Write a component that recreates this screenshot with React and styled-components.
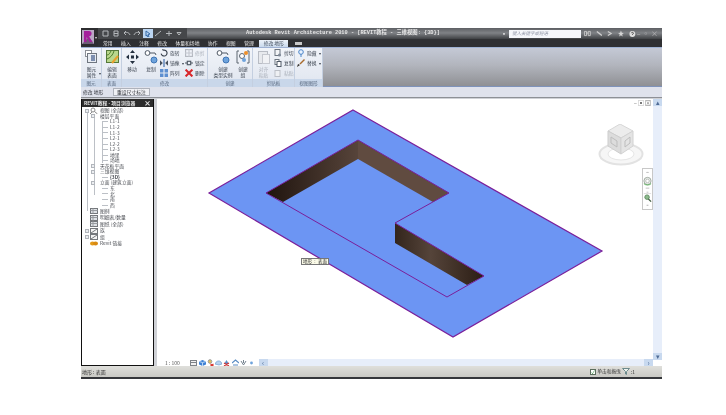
import React from 'react'
import styled, { createGlobalStyle } from 'styled-components'

const GlobalStyle = createGlobalStyle`
html, body {
    margin: 0;
    background: #fff;
}
body {
    font-family: "Noto Sans CJK SC", "Liberation Sans", sans-serif;
}
`

const tabs = ['常用', '插入', '注释', '修改', '体量和场地', '协作', '视图', '管理']

const tree = [
    { label: '视图 (全部)', depth: 0, box: true, icon: 'views' },
    { label: '楼层平面', depth: 1, box: true },
    { label: 'L1-1', depth: 2 },
    { label: 'L1-2', depth: 2 },
    { label: 'L1-3', depth: 2 },
    { label: 'L2-1', depth: 2 },
    { label: 'L2-2', depth: 2 },
    { label: 'L2-3', depth: 2 },
    { label: '地里', depth: 2 },
    { label: '场地', depth: 2 },
    { label: '天花板平面', depth: 1, box: true },
    { label: '三维视图', depth: 1, box: true },
    { label: '{3D}', depth: 2, bold: true },
    { label: '立面 (建筑立面)', depth: 1, box: true },
    { label: '东', depth: 2 },
    { label: '北', depth: 2 },
    { label: '南', depth: 2 },
    { label: '西', depth: 2 },
    { label: '图例', depth: 0, icon: 'sheet', gap: true },
    { label: '明细表/数量', depth: 0, icon: 'sheet', gap: true },
    { label: '图纸 (全部)', depth: 0, icon: 'sheet', gap: true },
    { label: '族', depth: 0, box: true, icon: 'family', gap: true },
    { label: '组', depth: 0, box: true, icon: 'family', gap: true },
    { label: 'Revit 链接', depth: 0, icon: 'link', gap: true },
]

const RibbonGlyph = ({ kind }) => {
    if (kind === 'props') return (
        <svg width="13" height="14" viewBox="0 0 13 14">
            <rect x="0.5" y="0.5" width="6" height="6" fill="#fff" stroke="#8b8f96" />
            <rect x="2.5" y="3.5" width="9" height="9" fill="#e9edf3" stroke="#6f7680" />
            <rect x="6" y="5" width="4" height="6" fill="#7d8fb0" />
        </svg>
    )
    if (kind === 'surface') return (
        <svg width="13" height="14" viewBox="0 0 13 14">
            <rect x="0.5" y="0.5" width="12" height="12" fill="#b9d78c" stroke="#55793a" />
            <path d="M1 9 C4 8 7 5 8 1 M1 5 C3 5 4 3 5 1" fill="none" stroke="#4d7d2c" />
            <path d="M6 13 L12 6" stroke="#e8a02c" strokeWidth="2" />
        </svg>
    )
    if (kind === 'move') return (
        <svg width="13" height="14" viewBox="0 0 13 14">
            <path d="M6.5 0 L9 3 H4 Z M6.5 14 L9 11 H4 Z M0 7 L3 4.5 V9.5 Z M13 7 L10 4.5 V9.5 Z" fill="#24303f" />
            <rect x="5" y="5.5" width="3" height="3" fill="#24303f" />
        </svg>
    )
    if (kind === 'copy') return (
        <svg width="14" height="14" viewBox="0 0 14 14">
            <circle cx="3.5" cy="3" r="2.4" fill="#fff" stroke="#4f5966" />
            <path d="M6 3 H11 L12 5" fill="none" stroke="#4f5966" />
            <circle cx="10" cy="10" r="3" fill="#6ea3dc" stroke="#3f75b5" />
        </svg>
    )
    if (kind === 'group') return (
        <svg width="14" height="14" viewBox="0 0 14 14">
            <path d="M3 1 H1 V13 H3 M11 1 H13 V13 H11" fill="none" stroke="#5d6671" />
            <circle cx="6" cy="6" r="2.5" fill="#fff" stroke="#5d6671" />
            <circle cx="10" cy="3" r="2" fill="#ee8f2a" />
            <circle cx="8" cy="10" r="2" fill="#6ea3dc" />
        </svg>
    )
    if (kind === 'paste') return (
        <svg width="12" height="14" viewBox="0 0 12 14">
            <rect x="0.5" y="1.5" width="9" height="12" fill="#e7e9ed" stroke="#b8bcc4" />
            <rect x="4.5" y="4.5" width="7" height="9" fill="#f1f2f5" stroke="#c5c8cf" />
        </svg>
    )
    return null
}

const SmallGlyph = ({ kind }) => {
    if (kind === 'rotate') return (
        <svg viewBox="0 0 7 7"><path d="M1 4 A2.6 2.6 0 1 0 3 1 L2 .5" fill="none" stroke="#39424e" /></svg>
    )
    if (kind === 'mirror') return (
        <svg viewBox="0 0 7 7"><path d="M3.5 0 V7" stroke="#3b69a8" /><path d="M0 1 L2.5 3.5 L0 6 Z M7 1 L4.5 3.5 L7 6 Z" fill="#47505c" /></svg>
    )
    if (kind === 'array') return (
        <svg viewBox="0 0 7 7"><path d="M0 0 H3 V3 H0 Z M4 0 H7 V3 H4 Z M0 4 H3 V7 H0 Z M4 4 H7 V7 H4 Z" fill="#5d8fd0" /></svg>
    )
    if (kind === 'trim') return (
        <svg viewBox="0 0 7 7"><rect x=".5" y=".5" width="6" height="6" fill="none" stroke="#b6bac2" /><path d="M3.5 0 V7 M0 3.5 H7" stroke="#c4c8cf" /></svg>
    )
    if (kind === 'lock') return (
        <svg viewBox="0 0 7 7"><path d="M0 3.5 H2 M5 3.5 H7" stroke="#4e5864" /><rect x="2" y="2" width="3" height="3" fill="none" stroke="#4e5864" /></svg>
    )
    if (kind === 'delete') return (
        <svg viewBox="0 0 7 7"><path d="M.5 .5 L6.5 6.5 M6.5 .5 L.5 6.5" stroke="#d8262a" strokeWidth="1.8" /></svg>
    )
    if (kind === 'cut') return (
        <svg viewBox="0 0 7 8"><rect x=".5" y=".5" width="5" height="6" fill="#f2f4f7" stroke="#6d7681" /><circle cx="5" cy="6" r="1.5" fill="#7f8a98" /></svg>
    )
    if (kind === 'clip') return (
        <svg viewBox="0 0 7 8"><rect x=".5" y=".5" width="4" height="5" fill="#fff" stroke="#6d7681" /><rect x="2.5" y="2.5" width="4" height="5" fill="#fff" stroke="#4f5966" /></svg>
    )
    if (kind === 'pasteSmall') return (
        <svg viewBox="0 0 7 8"><rect x=".5" y="1.5" width="5" height="6" fill="#eef0f3" stroke="#bcc0c7" /></svg>
    )
    if (kind === 'hide') return (
        <svg viewBox="0 0 7 8"><circle cx="3.5" cy="3" r="2.3" fill="#e9f3ff" stroke="#4c86c9" /><path d="M3.5 5 V8" stroke="#4c86c9" /></svg>
    )
    if (kind === 'brush') return (
        <svg viewBox="0 0 8 8"><path d="M7.5 .5 L3 5" stroke="#a86b2c" strokeWidth="1.4" /><path d="M0 8 L1 5 L3 6 Z" fill="#2e2a26" /></svg>
    )
    return null
}

const SmallTool = ({ kind, label, caret, muted }) => (
    <SmallRow $muted={muted}>
        <SmallGlyph kind={kind} />
        <span>{label}</span>
        {caret && <Caret>▾</Caret>}
    </SmallRow>
)

const LargeTool = ({ kind, lines, width, muted, caret }) => (
    <LargeToolBox $width={width} $muted={muted}>
        <GlyphSlot><RibbonGlyph kind={kind} /></GlyphSlot>
        {lines.map((line) => <span key={line}>{line}</span>)}
        {caret && <CaretCorner>▾</CaretCorner>}
    </LargeToolBox>
)

const AppButton = () => (
    <AppMenu>
        <svg width="12" height="14" viewBox="0 0 12 14">
            <rect width="12" height="14" fill="#b9a6c4" />
            <path d="M0 14 L7 7 L12 14 Z" fill="#6f5c78" />
            <path d="M2 1 H7 C10.5 1 10.5 6 7 6.5 L10.5 12 H7.5 L4.6 7 V12 H2 Z" fill="#a5219c" />
        </svg>
        <Caret>▾</Caret>
    </AppMenu>
)

const QuickIcon = ({ d, active }) => (
    <QuickButton $active={active}>
        <svg width="8" height="7" viewBox="0 0 8 7">
            <path d={d} fill="none" stroke={active ? '#356aa8' : '#b4b7ba'} strokeWidth="1" />
        </svg>
    </QuickButton>
)

const HelpIcons = () => (
    <HelpRow>
        <svg width="8" height="7" viewBox="0 0 8 7"><path d="M.5 1 H3 V6 H.5 Z M5 1 H7.5 V6 H5 Z M3 3 H5" fill="none" stroke="#cfcfcf" /></svg>
        <svg width="8" height="7" viewBox="0 0 8 7"><path d="M1 1 L7 6" stroke="#cfcfcf" strokeWidth="1.6" /></svg>
        <svg width="7" height="7" viewBox="0 0 7 7"><path d="M1 1 L5 3.5 L1 6" fill="none" stroke="#cfcfcf" strokeWidth="1.4" /></svg>
        <svg width="7" height="7" viewBox="0 0 7 7"><path d="M3.5 0 L4.5 2.5 L7 3 L5 4.5 L5.5 7 L3.5 5.5 L1.5 7 L2 4.5 L0 3 L2.5 2.5 Z" fill="#d4d4d4" /></svg>
        <svg width="8" height="8" viewBox="0 0 8 8"><circle cx="4" cy="4" r="3.5" fill="#e0e0e0" /><path d="M2.8 3 C3 1.6 5.4 1.8 5.2 3.2 C5 4 4 4 4 5" fill="none" stroke="#333" /></svg>
    </HelpRow>
)

const TreeIcon = ({ kind }) => {
    if (kind === 'views') return (
        <svg width="8" height="7" viewBox="0 0 8 7"><circle cx="3" cy="3" r="2" fill="#fff" stroke="#8a8a8a" /><path d="M4.5 4.5 L7.5 7 M0 7 L2 5" stroke="#8a8a8a" /></svg>
    )
    if (kind === 'sheet') return (
        <svg width="8" height="6" viewBox="0 0 8 6"><rect x=".5" y=".5" width="7" height="5" fill="#dfe2e6" stroke="#75787c" /><path d="M.5 2.5 H7.5 M3 .5 V5.5" stroke="#9a9da1" /></svg>
    )
    if (kind === 'family') return (
        <svg width="8" height="6" viewBox="0 0 8 6"><rect x=".5" y=".5" width="7" height="5" fill="#f4f4f4" stroke="#75787c" /><path d="M1 5 L7 1" stroke="#75787c" /></svg>
    )
    if (kind === 'link') return (
        <svg width="8" height="5" viewBox="0 0 8 5"><ellipse cx="2.5" cy="2.5" rx="2.5" ry="2" fill="#e39a19" /><ellipse cx="5.5" cy="2.5" rx="2.5" ry="2" fill="#d98a10" /></svg>
    )
    return null
}

const ViewCube = () => (
    <CubeWrap>
        <svg width="46" height="42" viewBox="0 0 46 42">
            <ellipse cx="23" cy="30" rx="21.5" ry="10.5" fill="#f6f6f6" stroke="#e2e2e2" strokeWidth="2" />
            <ellipse cx="23" cy="30" rx="13" ry="6" fill="#fff" stroke="#e6e6e6" />
            <path d="M22 0 L35 7 L23 14 L10 7 Z" fill="#ececec" stroke="#d6d6d6" />
            <path d="M10 7 L23 14 V30 L10 22 Z" fill="#dcdcdc" stroke="#cdcdcd" />
            <path d="M35 7 L23 14 V30 L35 22 Z" fill="#e4e4e4" stroke="#d2d2d2" />
            <path d="M13 13 L19 17 V23 L13 19 Z M27 17 L32 13 V19 L27 23 Z" fill="none" stroke="#bdbdbd" />
        </svg>
    </CubeWrap>
)

const NavBar = () => (
    <NavigationBar>
        <svg width="10" height="41" viewBox="0 0 10 41">
            <path d="M4 2 L5 1 L6 2" fill="none" stroke="#999" />
            <circle cx="5" cy="11" r="4" fill="#eef1ee" stroke="#98a39a" />
            <circle cx="5" cy="11" r="2" fill="#fff" stroke="#b5bbb6" />
            <path d="M1 14 C3 16 7 16 9 14" fill="none" stroke="#4ea84e" />
            <path d="M3 19 H7 M4 23.5 H6" stroke="#bbb" />
            <path d="M1 25 H9" stroke="#ddd" />
            <circle cx="4.5" cy="29" r="2.5" fill="#8dbb8d" stroke="#5f8a60" />
            <path d="M6 31 L9 34" stroke="#3f5c40" strokeWidth="1.4" />
            <path d="M4 38 H6" stroke="#aaa" />
        </svg>
    </NavigationBar>
)

const viewIcons = [
    <><rect x=".5" y="1.5" width="6" height="5" fill="#f2f2f2" stroke="#7f8388" /><path d="M.5 3.5 H6.5" stroke="#7f8388" /></>,
    <><path d="M3.5 1 L7 2.5 V5.5 L3.5 7 L0 5.5 V2.5 Z" fill="#3e82d6" /><path d="M3.5 3.5 V7 M0 2.5 L3.5 3.5 L7 2.5" stroke="#bcd6f2" fill="none" /></>,
    <><circle cx="3" cy="2.5" r="1.8" fill="#e6c45a" stroke="#9a9a9a" /><path d="M3.5 5 L6.5 7 M6.5 5 L3.5 7" stroke="#d8362f" strokeWidth="1.1" /></>,
    <><path d="M0 5 C1 2 4 1 6 3 L7 5 L4 6 Z" fill="#b7d2ee" stroke="#6a9dcf" strokeWidth=".7" /></>,
    <><path d="M1 5 L3.5 1 L6 5 Z" fill="#5e8fc8" /><path d="M1 4 L6 7 M6 4 L1 7" stroke="#d02f2f" strokeWidth="1.1" /></>,
    <><path d="M0 4 L3.5 1 L7 4 M1 6 H6" fill="none" stroke="#5a8cc4" strokeWidth="1.2" /></>,
    <><path d="M1 2 L3.5 6 L6 2 M3.5 1 V4" fill="none" stroke="#76838f" /></>,
    <><circle cx="3.5" cy="4" r="1.4" fill="#6ea3dc" /></>,
]

function Revit() {
    return (
        <Window>
            <TitleBar>
                <AppButton />
                <QuickBar>
                    <QuickIcon d="M1 1 H6 V6 H1 Z" />
                    <QuickIcon d="M2 1 H6 V6 H2 Z M2 3.5 H6" />
                    <QuickIcon d="M7 5 C6 2 3 2 1 3 L3 1 M1 3 L3 5" />
                    <QuickIcon d="M1 5 C2 2 5 2 7 3 L5 1 M7 3 L5 5" />
                    <QuickIcon active d="M2 1 L6 4 L4 4.5 L5 7 L3.5 7 L3 5 L2 6 Z" />
                    <QuickIcon d="M1 6 L7 1" />
                    <QuickIcon d="M4 1 V6 M1 3.5 H7" />
                    <QuickIcon d="M2 2.5 H6 L4 5 Z" />
                </QuickBar>
                <TitleText>Autodesk Revit Architecture 2010 - [REVIT教程 - 三维视图: {'{3D}'}]</TitleText>
                <SearchCaret>▪</SearchCaret>
                <SearchField>键入关键字或短语</SearchField>
                <HelpIcons />
                <WindowControls>
                    <span>–</span><span>▫</span><span>×</span>
                </WindowControls>
            </TitleBar>
            <TabBar>
                {tabs.map((tab) => <Tab key={tab}>{tab}</Tab>)}
                <ActiveTab>修改 地形</ActiveTab>
                <TabToggle />
            </TabBar>
            <Ribbon>
                <RibbonPanel $width={21} label="图元">
                    <LargeTool kind="props" lines={['图元', '属性']} width={21} caret />
                </RibbonPanel>
                <RibbonPanel $width={20} label="表面">
                    <LargeTool kind="surface" lines={['编辑', '表面']} width={20} />
                </RibbonPanel>
                <RibbonPanel $width={86} label="修改">
                    <LargeTool kind="move" lines={['移动']} width={20} />
                    <LargeTool kind="copy" lines={['复制']} width={18} />
                    <SmallColumn $width={25}>
                        <SmallTool kind="rotate" label="旋转" />
                        <SmallTool kind="mirror" label="镜像" caret />
                        <SmallTool kind="array" label="阵列" />
                    </SmallColumn>
                    <SmallColumn $width={23}>
                        <SmallTool kind="trim" label="修剪" muted />
                        <SmallTool kind="lock" label="锁定" />
                        <SmallTool kind="delete" label="删除" />
                    </SmallColumn>
                </RibbonPanel>
                <RibbonPanel $width={45} label="创建">
                    <LargeTool kind="copy" lines={['创建', '类型实例']} width={30} />
                    <LargeTool kind="group" lines={['创建', '组']} width={10} />
                </RibbonPanel>
                <RibbonPanel $width={42} label="剪贴板">
                    <LargeTool kind="paste" lines={['对齐', '粘贴']} width={21} muted />
                    <SmallColumn $width={21}>
                        <SmallTool kind="cut" label="剪切" />
                        <SmallTool kind="clip" label="复制" />
                        <SmallTool kind="pasteSmall" label="粘贴" muted />
                    </SmallColumn>
                </RibbonPanel>
                <RibbonPanel $width={28} label="视图图形">
                    <SmallColumn $width={28} $inset={2}>
                        <SmallTool kind="hide" label="隐藏" caret />
                        <SmallTool kind="brush" label="替换" caret />
                    </SmallColumn>
                </RibbonPanel>
                <RibbonFill />
            </Ribbon>
            <OptionsBar>
                <OptionsLabel>修改 地形</OptionsLabel>
                <OptionsButton>重设尺寸标注</OptionsButton>
            </OptionsBar>
            <Workspace>
                <Browser>
                    <BrowserTitle>
                        <span>REVIT教程 - 项目浏览器</span>
                        <b>×</b>
                    </BrowserTitle>
                    <TreeList>
                        {tree.map((item, i) => (
                            <TreeRow key={i} $gap={item.gap} $bold={item.bold}>
                                <TreeLead $depth={item.depth} $box={item.box}>
                                    {item.box && <Expander />}
                                    {item.depth === 2 && <TreeDash />}
                                    <TreeIcon kind={item.icon} />
                                </TreeLead>
                                <span>{item.label}</span>
                            </TreeRow>
                        ))}
                    </TreeList>
                </Browser>
                <ViewPane>
                    <ViewArea>
                        <Model viewBox="157 99 496 260">
                            <defs>
                                <linearGradient id="wallLeft" x1="0" x2="1" y1="0" y2="0">
                                    <stop offset="0" stopColor="#1f140e" />
                                    <stop offset="1" stopColor="#57443a" />
                                </linearGradient>
                                <linearGradient id="wallFront" x1="0" x2="1" y1="0" y2="0">
                                    <stop offset="0" stopColor="#33251c" />
                                    <stop offset="0.4" stopColor="#55443a" />
                                    <stop offset="1" stopColor="#2b1d14" />
                                </linearGradient>
                            </defs>
                            <polygon points="353,110 602,251 453,337 209,193" fill="#6c95f3" stroke="#7a1f9a" strokeWidth="1.2" />
                            <polygon points="266,193 358,140 358,159 283,202" fill="url(#wallLeft)" />
                            <polygon points="358,140 449,193 433,202 358,159" fill="#604b40" />
                            <polygon points="395,223 484,276 467,285 395,243" fill="url(#wallFront)" />
                            <polygon points="266,193 358,140 449,193 395,223 484,276 447,297" fill="none" stroke="#7a1f9a" strokeWidth="1" />
                        </Model>
                        <Tip><span>地形</span><span>:</span><span>表面</span></Tip>
                        <WindowButtons>
                            <i>–</i><i>▣</i><i>⊠</i>
                        </WindowButtons>
                        <ViewCube />
                        <NavBar />
                    </ViewArea>
                    <VScroll>
                        <ScrollArrow>▴</ScrollArrow>
                        <ScrollArrow>▾</ScrollArrow>
                    </VScroll>
                    <ViewBar>
                        <Scale>1 : 100</Scale>
                        {viewIcons.map((icon, i) => (
                            <svg key={i} width="7" height="7" viewBox="0 0 7 7">{icon}</svg>
                        ))}
                        <HScroll>
                            <ScrollArrow>‹</ScrollArrow>
                            <ScrollArrow>›</ScrollArrow>
                        </HScroll>
                    </ViewBar>
                </ViewPane>
            </Workspace>
            <StatusBar>
                <span>地形 : 表面</span>
                <StatusRight>
                    <CheckMark>✓</CheckMark>
                    <StatusHint>单击和拖曳</StatusHint>
                    <svg width="8" height="7" viewBox="0 0 8 7"><path d="M.5 .5 H7.5 L4.5 3.5 V6.5 L3.5 6 V3.5 Z" fill="#eef3ef" stroke="#6c8a8c" /></svg>
                    <span>:1</span>
                </StatusRight>
            </StatusBar>
        </Window>
    )
}

export default function App() {
    return (
        <>
            <GlobalStyle />
            <Revit />
        </>
    )
}

const Window = styled.div`
width: 581px;
height: 349px;
margin: 28px 0 0 81px;
display: flex;
flex-direction: column;
background: #d9dbe0;
font-size: 5.5px;
line-height: 1;
color: #2c2f36;
border-bottom: 2px solid #34363a;
filter: blur(0.3px);
`

const TitleBar = styled.div`
height: 11px;
flex: none;
display: flex;
align-items: center;
color: #e8e8e8;
background: linear-gradient(#5d5f63, #7f8286 45%, #3f4144);
`
const AppMenu = styled.div`
position: relative;
z-index: 1;
width: 17px;
height: 18px;
flex: none;
align-self: flex-start;
display: flex;
align-items: center;
gap: 1px;
padding-left: 1px;
box-sizing: border-box;
color: #ddd;
background: #2d2d30;
`
const Caret = styled.span`
font-size: 4px;
color: inherit;
`
const QuickBar = styled.div`
display: flex;
align-items: center;
gap: 1px;
height: 11px;
padding: 0 3px;
background: #45474a;
`
const QuickButton = styled.div`
width: 9.5px;
height: 9px;
display: flex;
align-items: center;
justify-content: center;
background: ${(p) => (p.$active ? '#bcd6f2' : 'transparent')};
`
const TitleText = styled.div`
margin-left: 59px;
font-family: "Liberation Mono", "Noto Sans CJK SC", monospace;
font-weight: 700;
font-size: 5.3px;
white-space: nowrap;
color: #e6e6e6;
`
const SearchCaret = styled.span`
margin-left: auto;
margin-right: 2px;
font-size: 6px;
color: #ddd;
`
const SearchField = styled.div`
width: 72px;
height: 8px;
padding-left: 3px;
box-sizing: border-box;
display: flex;
align-items: center;
font-style: italic;
font-size: 4.5px;
color: #8f95a6;
background: #f5f7fb;
`
const HelpRow = styled.div`
width: 55px;
height: 11px;
padding-left: 3px;
box-sizing: border-box;
display: flex;
align-items: center;
gap: 5px;
`
const WindowControls = styled.div`
width: 26px;
display: flex;
justify-content: space-around;
padding-right: 3px;
box-sizing: border-box;
font-size: 7px;
color: #bdbdbd;
`

const TabBar = styled.div`
height: 8px;
flex: none;
display: flex;
align-items: flex-end;
padding-left: 22px;
gap: 8.5px;
background: #2f3033;
border-bottom: 1px solid #9fb2d4;
`
const Tab = styled.div`
height: 7px;
display: flex;
align-items: center;
font-size: 4.8px;
color: #eaeaea;
`
const ActiveTab = styled(Tab)`
width: 29px;
margin-left: -3px;
justify-content: center;
color: #3f4a5a;
background: linear-gradient(#eef3fa, #c9d9ec);
`
const TabToggle = styled.div`
width: 7px;
height: 3px;
margin: 0 0 2px -2px;
background: #c8c8c8;
`

const Ribbon = styled.div`
height: 39px;
flex: none;
display: flex;
background: #e8edf5;
`
const PanelBox = styled.div`
width: ${(p) => p.$width}px;
flex: none;
display: flex;
flex-direction: column;
box-sizing: border-box;
border-right: 1px solid #c4cfe0;
`
const PanelBody = styled.div`
flex: 1;
display: flex;
background: linear-gradient(#f1f4f9, #e3e8f1);
`
const PanelLabel = styled.div`
height: 8px;
display: flex;
align-items: center;
justify-content: center;
font-size: 4.6px;
color: #5a6a80;
background: #c9d7ea;
`
const RibbonPanel = ({ $width, label, children }) => (
    <PanelBox $width={$width}>
        <PanelBody>{children}</PanelBody>
        <PanelLabel>{label}</PanelLabel>
    </PanelBox>
)
const RibbonFill = styled.div`
flex: 1;
background: linear-gradient(#c4c9d6, #b2b5bd 45%, #8f9094);
border-bottom: 1px solid #7f93bb;
`
const LargeToolBox = styled.div`
position: relative;
width: ${(p) => p.$width}px;
flex: none;
display: flex;
flex-direction: column;
align-items: center;
gap: 1px;
padding-top: 2px;
font-size: 4.8px;
white-space: nowrap;
color: ${(p) => (p.$muted ? '#aab0ba' : '#3c4450')};
`
const GlyphSlot = styled.div`
height: 16px;
display: flex;
align-items: flex-start;
`
const CaretCorner = styled.span`
position: absolute;
right: 1px;
bottom: 4px;
font-size: 4px;
`
const SmallColumn = styled.div`
width: ${(p) => p.$width}px;
flex: none;
display: flex;
flex-direction: column;
gap: 2px;
padding: 1px 0 0 ${(p) => p.$inset || 0}px;
box-sizing: border-box;
`
const SmallRow = styled.div`
display: flex;
align-items: center;
gap: 2px;
height: 8px;
font-size: 4.8px;
white-space: nowrap;
color: ${(p) => (p.$muted ? '#aab0ba' : '#3c4450')};
svg {
    width: 8px;
    height: 8px;
    flex: none;
}
`

const OptionsBar = styled.div`
height: 11px;
flex: none;
display: flex;
align-items: center;
gap: 8px;
padding-left: 2px;
box-sizing: border-box;
background: #dfe2ec;
border-bottom: 1px solid #8d9096;
`
const OptionsLabel = styled.span`
width: 22px;
font-size: 4.8px;
`
const OptionsButton = styled.div`
height: 8px;
padding: 0 3px;
display: flex;
align-items: center;
font-size: 4.8px;
background: #f0f1f5;
border: 1px solid #aeb2bb;
box-sizing: border-box;
`

const Workspace = styled.div`
flex: 1;
min-height: 0;
display: flex;
gap: 3px;
padding-top: 1px;
background: #cfd1d6;
`
const Browser = styled.div`
width: 73px;
flex: none;
display: flex;
flex-direction: column;
box-sizing: border-box;
background: #fff;
border: 1.5px solid #111;
border-top: 0;
`
const BrowserTitle = styled.div`
height: 8px;
flex: none;
display: flex;
align-items: center;
justify-content: space-between;
padding: 0 2px;
font-size: 4.8px;
font-weight: 700;
white-space: nowrap;
color: #e8e8e8;
background: #2d2d2d;
b {
    font-size: 7px;
}
`
const TreeList = styled.div`
padding-top: 1px;
background:
    linear-gradient(#bcc0c6, #bcc0c6) 4.5px 4px / 1px 100px no-repeat,
    linear-gradient(#bcc0c6, #bcc0c6) 11.5px 10px / 1px 78px no-repeat,
    linear-gradient(#bcc0c6, #bcc0c6) 19.5px 14px / 1px 42px no-repeat;
`
const TreeRow = styled.div`
display: flex;
align-items: center;
height: ${(p) => (p.$gap ? 6.5 : 5.55)}px;
font-size: 4.8px;
white-space: nowrap;
font-weight: ${(p) => (p.$bold ? 700 : 400)};
color: #4a4d53;
`
const TreeLead = styled.div`
width: ${(p) => (p.$depth === 2 ? 28 : 18)}px;
flex: none;
display: flex;
align-items: center;
gap: 1px;
box-sizing: border-box;
padding-left: ${(p) => {
    if (p.$depth === 2) return 20
    if (p.$depth === 1) return 9
    return p.$box ? 3 : 8
}}px;
`
const Expander = styled.i`
width: 4px;
height: 4px;
flex: none;
box-sizing: border-box;
background: #eceef1;
border: 1px solid #b2b6bc;
`
const TreeDash = styled.i`
width: 6px;
height: 1px;
flex: none;
background: #bcc0c6;
`

const ViewPane = styled.div`
flex: 1;
min-width: 0;
display: grid;
grid-template-columns: 1fr 9px;
grid-template-rows: 1fr 7px;
background: #fff;
`
const ViewArea = styled.div`
position: relative;
overflow: hidden;
background: #fff;
`
const Model = styled.svg`
position: absolute;
left: 0;
top: 0;
width: 496px;
height: 260px;
`
const Tip = styled.div`
position: absolute;
left: 144px;
top: 159px;
width: 28px;
height: 7px;
display: flex;
align-items: center;
justify-content: space-between;
padding: 0 1px;
box-sizing: border-box;
font-size: 4.5px;
color: #333;
background: #fbfbe8;
border: 1px solid #777;
`
const WindowButtons = styled.div`
position: absolute;
right: 2px;
top: 1px;
display: flex;
gap: 1px;
font-size: 6px;
color: #777;
i {
    font-style: normal;
}
`
const CubeWrap = styled.div`
position: absolute;
left: 441px;
top: 25px;
`
const NavigationBar = styled.div`
position: absolute;
left: 485px;
top: 69px;
width: 11px;
height: 42px;
display: flex;
justify-content: center;
background: #fff;
border: 1px solid #c8c8c8;
box-sizing: border-box;
`
const VScroll = styled.div`
grid-row: 1 / span 2;
display: flex;
flex-direction: column;
justify-content: space-between;
background: #e7eefa;
margin-bottom: 6px;
`
const ScrollArrow = styled.div`
width: 9px;
height: 7px;
display: flex;
align-items: center;
justify-content: center;
font-size: 7px;
color: #4e6b96;
background: #c8d9ef;
`
const ViewBar = styled.div`
grid-column: 1;
grid-row: 2;
display: flex;
align-items: center;
gap: 1.3px;
padding-left: 8px;
background: #fff;
`
const Scale = styled.span`
width: 24px;
font-size: 5px;
color: #555;
`
const HScroll = styled.div`
flex: 1;
height: 7px;
margin-left: 2px;
display: flex;
justify-content: space-between;
background: #e7eefa;
`

const StatusBar = styled.div`
height: 11px;
flex: none;
display: flex;
align-items: center;
justify-content: space-between;
padding: 0 27px 0 1px;
box-sizing: border-box;
font-size: 5px;
color: #333;
background: linear-gradient(#dfdfdb, #c9c9c4);
`
const StatusRight = styled.div`
display: flex;
align-items: center;
gap: 1px;
`
const StatusHint = styled.span`
font-size: 4.8px;
letter-spacing: -0.1px;
`
const CheckMark = styled.span`
width: 6px;
height: 6px;
display: flex;
align-items: center;
justify-content: center;
box-sizing: border-box;
font-size: 5px;
color: #1d8a2d;
background: #fff;
border: 1px solid #5b6d5d;
`
